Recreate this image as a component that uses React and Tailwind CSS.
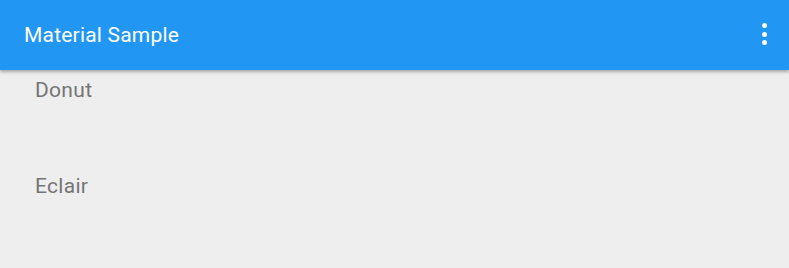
// Material sample: blue app bar with overflow menu, plain list of items below.

import React from 'react'

const items = ['Donut', 'Eclair']

export default function App() {
  return (
    <div className="w-[789px] h-[268px] bg-[#eeeeee] overflow-hidden font-['Roboto',sans-serif]">
      <header className="relative z-10 h-[70px] bg-[#2196f3] flex items-center justify-between pl-6 pr-[22px] shadow-[0_2px_3px_rgba(0,0,0,0.3)]">
        <h1 className="text-white text-[21px] tracking-[0.2px] leading-none">Material Sample</h1>
        <button className="flex flex-col gap-[3.5px] -mt-[2px]" aria-label="More options">
          <span className="w-[5px] h-[5px] rounded-full bg-white" />
          <span className="w-[5px] h-[5px] rounded-full bg-white" />
          <span className="w-[5px] h-[5px] rounded-full bg-white" />
        </button>
      </header>

      <ul className="-mt-[27px]">
        {items.map(name => (
          <li key={name} className="h-[96px] flex items-center pl-[35px] text-[21px] tracking-[0.3px] text-[#757575]">
            {name}
          </li>
        ))}
      </ul>
    </div>
  )
}
